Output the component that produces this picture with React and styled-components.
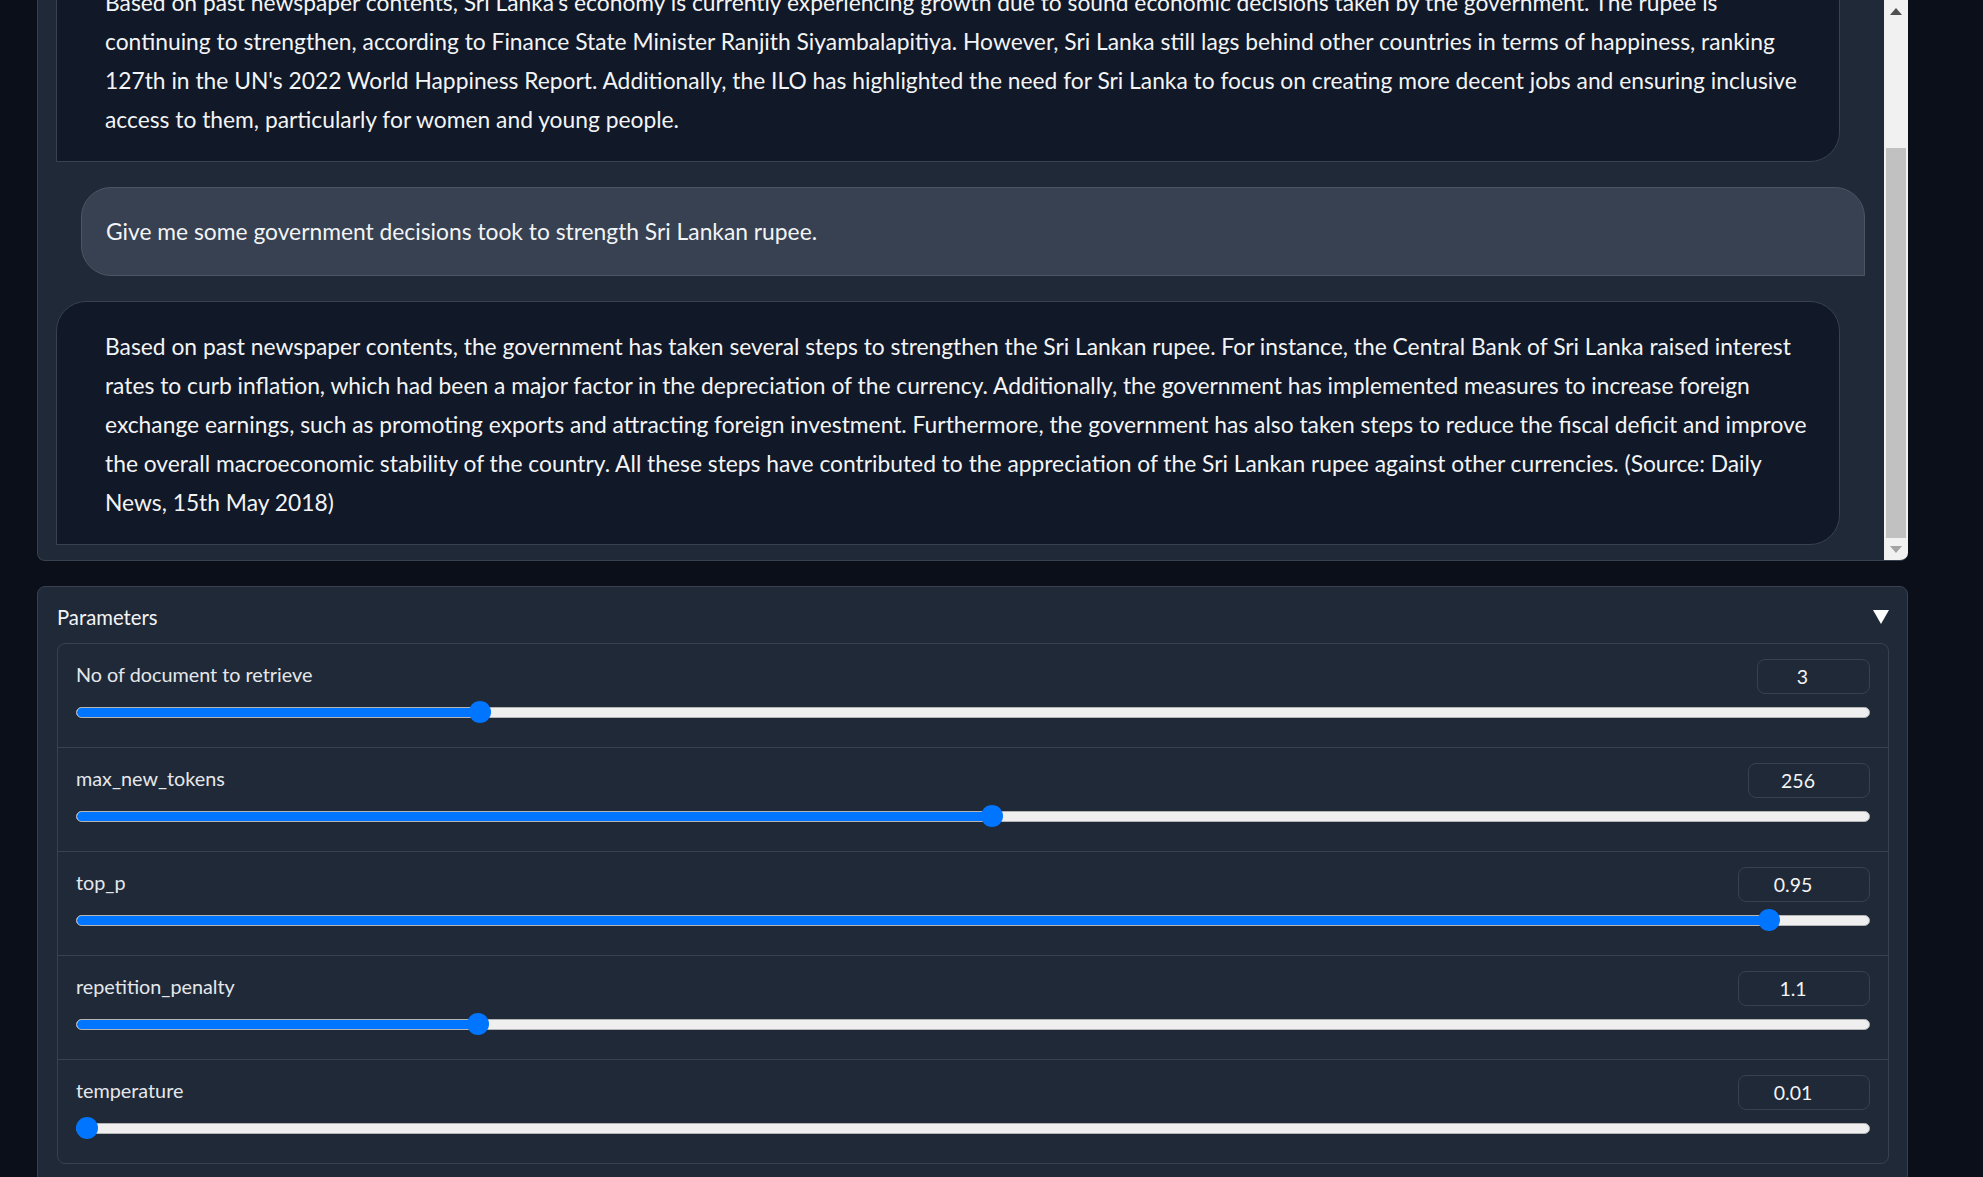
import React from 'react';
import styled, { createGlobalStyle } from 'styled-components';

const Global = createGlobalStyle`
  html, body { margin: 0; padding: 0; overflow: hidden; background: #0b0f19; }
  body { font-family: 'Lato', 'Noto Sans', sans-serif; color: #f3f4f6; }
  * { box-sizing: border-box; }
`;

const Page = styled.div`
  display: flex;
  flex-direction: column;
  gap: 25px;
  padding: 0 75px 0 37px;
  width: 1983px;
  height: 1177px;
`;

const ChatPanel = styled.div`
  display: flex;
  height: 561px;
  flex-shrink: 0;
  background: #1f2937;
  border: 1px solid #374151;
  border-top: none;
  border-right: none;
  border-radius: 0 0 8px 8px;
  overflow: hidden;
`;

const MessageList = styled.div`
  flex: 1;
  display: flex;
  flex-direction: column;
  justify-content: flex-end;
  gap: 25px;
  padding: 0 19px 15px 18px;
  overflow: hidden;
`;

const Bubble = styled.div`
  width: calc(100% - 25px);
  flex-shrink: 0;
  align-self: ${p => (p.$user ? 'flex-end' : 'flex-start')};
  background: ${p => (p.$user ? '#374151' : '#111827')};
  border: 1px solid ${p => (p.$user ? '#4b5563' : '#374151')};
  border-radius: ${p => (p.$user ? '30px 30px 0 30px' : '30px 30px 30px 0')};
  padding: ${p => (p.$user ? '24px 24px 24px 24px' : '25px 25px 22px 48px')};
  font-size: 22.8px;
  line-height: 39px;
  color: #f3f4f6;
`;

const Line = styled.span`
  display: block;
  white-space: nowrap;
`;

const Scrollbar = styled.div`
  width: 24px;
  flex-shrink: 0;
  background: #f1f1f1;
  display: flex;
  flex-direction: column;
`;

const ScrollButton = styled.div`
  height: 22px;
  display: flex;
  align-items: center;
  justify-content: center;
`;

const ScrollTrack = styled.div`
  flex: 1;
  display: flex;
  flex-direction: column;
  padding: 0 2px;
`;

const ScrollThumb = styled.div`
  margin-top: auto;
  height: 390px;
  background: #c1c1c1;
`;

const ParamsPanel = styled.div`
  background: #1f2937;
  border: 1px solid #374151;
  border-radius: 8px;
  padding: 18px 18px 18px 19px;
  display: flex;
  flex-direction: column;
  gap: 14px;
`;

const ParamsHeader = styled.div`
  display: flex;
  align-items: center;
  justify-content: space-between;
  height: 24px;
  font-size: 20.3px;
  color: #f3f4f6;
`;

const ParamsBlock = styled.div`
  border: 1px solid #374151;
  border-radius: 8px;
  display: flex;
  flex-direction: column;
`;

const Row = styled.div`
  padding: 15px 18px 24px 18px;
  display: flex;
  flex-direction: column;
  gap: 7px;
  & + & {
    border-top: 1px solid #374151;
  }
`;

const RowTop = styled.div`
  display: flex;
  align-items: center;
  justify-content: space-between;
  height: 35px;
`;

const Label = styled.span`
  font-size: 19.8px;
  color: #e5e7eb;
  margin-top: -5px;
`;

const NumberBox = styled.div`
  width: ${p => p.$w}px;
  height: 35px;
  border: 1px solid #374151;
  border-radius: 8px;
  background: #1f2937;
  display: flex;
  align-items: center;
  justify-content: center;
  padding: 0 30px 0 8px;
  font-size: 19.5px;
  color: #f3f4f6;
`;

const SliderWrap = styled.div`
  position: relative;
  height: 22px;
  display: flex;
  align-items: center;
`;

const Track = styled.div`
  position: relative;
  width: 100%;
  height: 11px;
  background: #efefef;
  border: 1px solid #b5b5b5;
  border-radius: 6px;
  overflow: hidden;
`;

const Fill = styled.div`
  position: absolute;
  left: 0;
  top: -1px;
  bottom: -1px;
  background: #0075ff;
  border-radius: 6px 0 0 6px;
`;

const Thumb = styled.div`
  position: absolute;
  top: 0;
  width: 22px;
  height: 22px;
  border-radius: 50%;
  background: #0075ff;
`;

const bot1 = [
  "Based on past newspaper contents, Sri Lanka's economy is currently experiencing growth due to sound economic decisions taken by the government. The rupee is",
  "continuing to strengthen, according to Finance State Minister Ranjith Siyambalapitiya. However, Sri Lanka still lags behind other countries in terms of happiness, ranking",
  "127th in the UN's 2022 World Happiness Report. Additionally, the ILO has highlighted the need for Sri Lanka to focus on creating more decent jobs and ensuring inclusive",
  "access to them, particularly for women and young people.",
];

const bot2 = [
  "Based on past newspaper contents, the government has taken several steps to strengthen the Sri Lankan rupee. For instance, the Central Bank of Sri Lanka raised interest",
  "rates to curb inflation, which had been a major factor in the depreciation of the currency. Additionally, the government has implemented measures to increase foreign",
  "exchange earnings, such as promoting exports and attracting foreign investment. Furthermore, the government has also taken steps to reduce the fiscal deficit and improve",
  "the overall macroeconomic stability of the country. All these steps have contributed to the appreciation of the Sri Lankan rupee against other currencies. (Source: Daily",
  "News, 15th May 2018)",
];

const params = [
  { label: 'No of document to retrieve', value: '3', frac: 0.222, w: 113 },
  { label: 'max_new_tokens', value: '256', frac: 0.511, w: 122 },
  { label: 'top_p', value: '0.95', frac: 0.949, w: 132 },
  { label: 'repetition_penalty', value: '1.1', frac: 0.2206, w: 132 },
  { label: 'temperature', value: '0.01', frac: 0, w: 132 },
];

function Slider({ frac }) {
  return (
    <SliderWrap>
      <Track>
        <Fill style={{ width: `calc(11px + ${frac} * (100% - 22px))` }} />
      </Track>
      <Thumb style={{ left: `calc(${frac} * (100% - 22px))` }} />
    </SliderWrap>
  );
}

export default function App() {
  return (
    <>
      <Global />
      <Page>
        <ChatPanel>
          <MessageList>
            <Bubble>
              {bot1.map((l, i) => <Line key={i}>{l}</Line>)}
            </Bubble>
            <Bubble $user>
              <Line>Give me some government decisions took to strength Sri Lankan rupee.</Line>
            </Bubble>
            <Bubble>
              {bot2.map((l, i) => <Line key={i}>{l}</Line>)}
            </Bubble>
          </MessageList>
          <Scrollbar>
            <ScrollButton>
              <svg width="12" height="7" viewBox="0 0 12 7"><polygon points="0,7 6,0 12,7" fill="#505050" /></svg>
            </ScrollButton>
            <ScrollTrack>
              <ScrollThumb />
            </ScrollTrack>
            <ScrollButton>
              <svg width="12" height="7" viewBox="0 0 12 7"><polygon points="0,0 6,7 12,0" fill="#a3a3a3" /></svg>
            </ScrollButton>
          </Scrollbar>
        </ChatPanel>
        <ParamsPanel>
          <ParamsHeader>
            <span>Parameters</span>
            <svg width="16" height="14" viewBox="0 0 16 14"><polygon points="0,0 16,0 8,14" fill="#ffffff" /></svg>
          </ParamsHeader>
          <ParamsBlock>
            {params.map(p => (
              <Row key={p.label}>
                <RowTop>
                  <Label>{p.label}</Label>
                  <NumberBox $w={p.w}>{p.value}</NumberBox>
                </RowTop>
                <Slider frac={p.frac} />
              </Row>
            ))}
          </ParamsBlock>
        </ParamsPanel>
      </Page>
    </>
  );
}
